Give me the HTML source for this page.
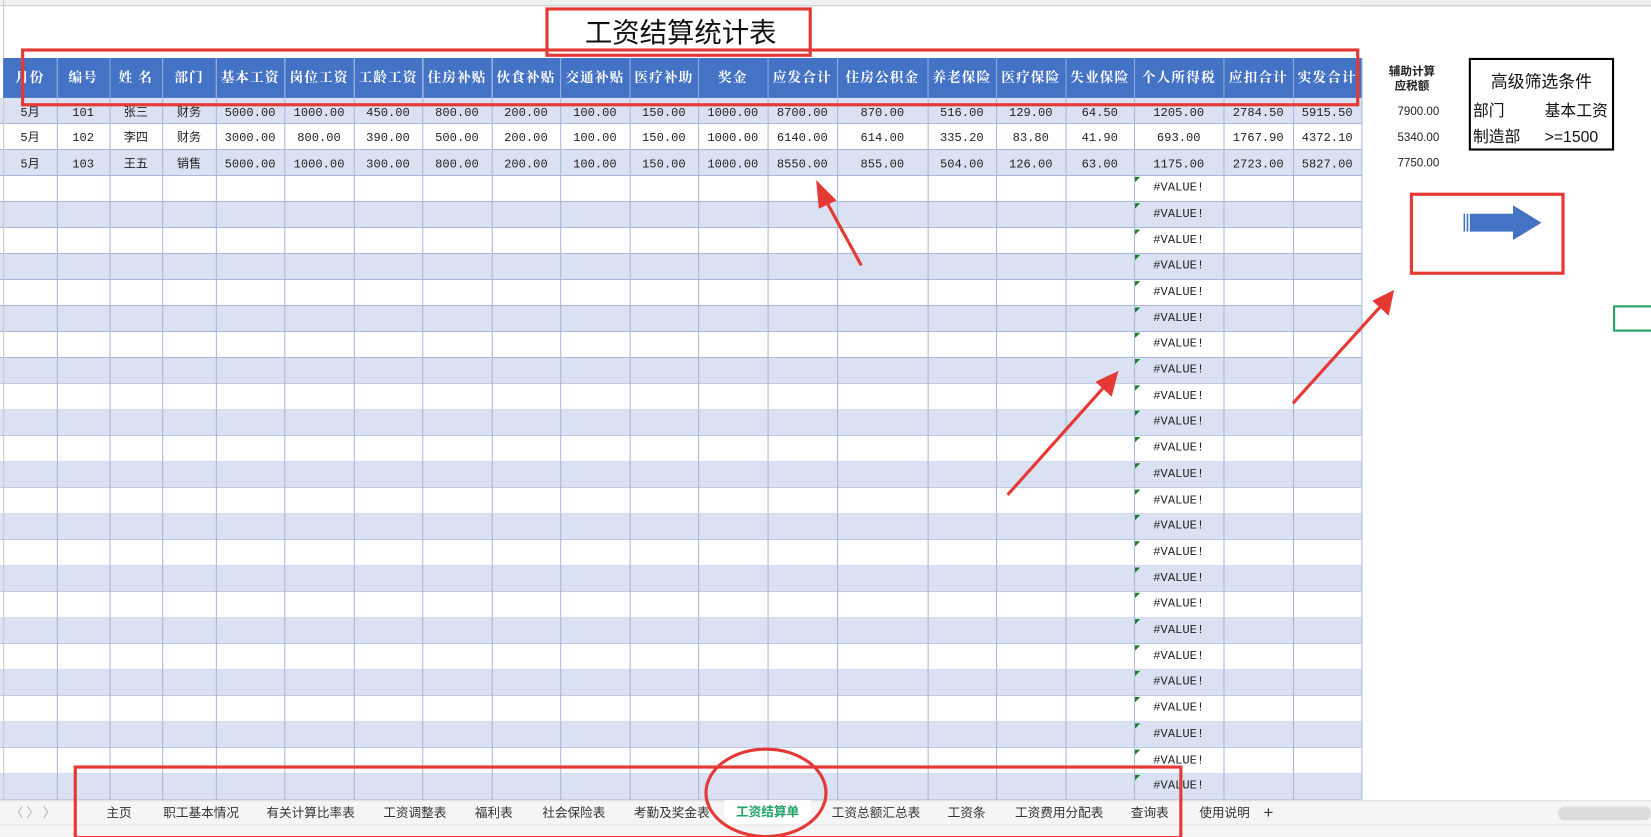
<!DOCTYPE html><html><head><meta charset="utf-8"><style>
*{margin:0;padding:0;box-sizing:border-box}
body{width:1651px;height:837px;overflow:hidden;background:#fff;font-family:"Liberation Sans","Noto Sans CJK SC",sans-serif}
#s{position:absolute;left:0;top:0;width:1568px;height:795px;transform:scale(1.0529);transform-origin:0 0;overflow:hidden}
.a{position:absolute}
.vl{position:absolute;top:55px;height:705px;width:1px;background:#a7b8dc}
#grid{left:0;top:93px;width:1293px;height:667px;background:repeating-linear-gradient(#d9e1f2 0,#d9e1f2 24px,#a7b8dc 24px,#a7b8dc 24.7px,#fff 24.7px,#fff 48.7px,#a7b8dc 48.7px,#a7b8dc 49.4px)}
table{position:absolute;left:3px;border-collapse:collapse;table-layout:fixed;width:1290px}
td{padding:0;text-align:center;overflow:hidden;white-space:nowrap;font-family:"Liberation Mono","Noto Sans CJK SC",monospace;font-size:11.5px;color:#222}
.d td{height:24.7px;line-height:24.7px}
.h td{height:38px;line-height:38px;color:#fff;font-weight:bold;font-family:"Liberation Sans","Noto Serif CJK SC",serif;font-size:13px;letter-spacing:1px;background:#4472c4;border-right:1px solid #8aa6d8}
.v{position:absolute;left:1077px;width:85px;height:24.7px;line-height:24.7px;text-align:center;font-family:"Liberation Mono",monospace;font-size:11.5px;color:#222}
.v:before{content:"";position:absolute;left:1px;top:1px;border-top:5px solid #1a7f2a;border-right:5px solid transparent}
.r{position:absolute;border:3px solid #e53935}
</style></head><body><div id="s">
<div class="a" style="left:0;top:0;width:1568px;height:6px;background:#eef0f2;border-bottom:1px solid #c8c8c8"></div>
<div class="a" id="grid"></div>
<div class="a" style="left:0;top:6px;width:1293px;height:49px;background:#fff"></div>
<div class="vl" style="left:3px;top:0;height:760px;background:#c8c8c8"></div>
<div class="vl" style="left:54px"></div><div class="vl" style="left:104px"></div><div class="vl" style="left:154px"></div><div class="vl" style="left:205px"></div><div class="vl" style="left:270px"></div><div class="vl" style="left:336px"></div><div class="vl" style="left:401px"></div><div class="vl" style="left:467px"></div><div class="vl" style="left:532px"></div><div class="vl" style="left:598px"></div><div class="vl" style="left:663px"></div><div class="vl" style="left:729px"></div><div class="vl" style="left:795px"></div><div class="vl" style="left:881px"></div><div class="vl" style="left:946px"></div><div class="vl" style="left:1012px"></div><div class="vl" style="left:1077px"></div><div class="vl" style="left:1162px"></div><div class="vl" style="left:1228px"></div><div class="vl" style="left:1293px"></div>
<div class="a" style="left:0;top:8px;width:1293px;text-align:center;font-size:26px;line-height:46px;color:#111">工资结算统计表</div>
<table class="h" style="top:55px">
<colgroup><col style="width:51px"><col style="width:50px"><col style="width:50px"><col style="width:51px"><col style="width:65px"><col style="width:66px"><col style="width:65px"><col style="width:66px"><col style="width:65px"><col style="width:66px"><col style="width:65px"><col style="width:66px"><col style="width:66px"><col style="width:86px"><col style="width:65px"><col style="width:66px"><col style="width:65px"><col style="width:85px"><col style="width:66px"><col style="width:65px"></colgroup>
<tr><td>月份</td><td>编号</td><td>姓 名</td><td>部门</td><td>基本工资</td><td>岗位工资</td><td>工龄工资</td><td>住房补贴</td><td>伙食补贴</td><td>交通补贴</td><td>医疗补助</td><td>奖金</td><td>应发合计</td><td>住房公积金</td><td>养老保险</td><td>医疗保险</td><td>失业保险</td><td>个人所得税</td><td>应扣合计</td><td>实发合计</td></tr></table>
<table class="d" style="top:95.5px">
<colgroup><col style="width:51px"><col style="width:50px"><col style="width:50px"><col style="width:51px"><col style="width:65px"><col style="width:66px"><col style="width:65px"><col style="width:66px"><col style="width:65px"><col style="width:66px"><col style="width:65px"><col style="width:66px"><col style="width:66px"><col style="width:86px"><col style="width:65px"><col style="width:66px"><col style="width:65px"><col style="width:85px"><col style="width:66px"><col style="width:65px"></colgroup>
<tr><td>5月</td><td>101</td><td>张三</td><td>财务</td><td>5000.00</td><td>1000.00</td><td>450.00</td><td>800.00</td><td>200.00</td><td>100.00</td><td>150.00</td><td>1000.00</td><td>8700.00</td><td>870.00</td><td>516.00</td><td>129.00</td><td>64.50</td><td>1205.00</td><td>2784.50</td><td>5915.50</td></tr>
<tr><td>5月</td><td>102</td><td>李四</td><td>财务</td><td>3000.00</td><td>800.00</td><td>390.00</td><td>500.00</td><td>200.00</td><td>100.00</td><td>150.00</td><td>1000.00</td><td>6140.00</td><td>614.00</td><td>335.20</td><td>83.80</td><td>41.90</td><td>693.00</td><td>1767.90</td><td>4372.10</td></tr>
<tr><td>5月</td><td>103</td><td>王五</td><td>销售</td><td>5000.00</td><td>1000.00</td><td>300.00</td><td>800.00</td><td>200.00</td><td>100.00</td><td>150.00</td><td>1000.00</td><td>8550.00</td><td>855.00</td><td>504.00</td><td>126.00</td><td>63.00</td><td>1175.00</td><td>2723.00</td><td>5827.00</td></tr>
</table>
<div class="v" style="top:167.1px">#VALUE!</div><div class="v" style="top:191.8px">#VALUE!</div><div class="v" style="top:216.5px">#VALUE!</div><div class="v" style="top:241.2px">#VALUE!</div><div class="v" style="top:265.9px">#VALUE!</div><div class="v" style="top:290.6px">#VALUE!</div><div class="v" style="top:315.3px">#VALUE!</div><div class="v" style="top:340px">#VALUE!</div><div class="v" style="top:364.7px">#VALUE!</div><div class="v" style="top:389.4px">#VALUE!</div><div class="v" style="top:414.1px">#VALUE!</div><div class="v" style="top:438.8px">#VALUE!</div><div class="v" style="top:463.5px">#VALUE!</div><div class="v" style="top:488.2px">#VALUE!</div><div class="v" style="top:512.9px">#VALUE!</div><div class="v" style="top:537.6px">#VALUE!</div><div class="v" style="top:562.3px">#VALUE!</div><div class="v" style="top:587px">#VALUE!</div><div class="v" style="top:611.7px">#VALUE!</div><div class="v" style="top:636.4px">#VALUE!</div><div class="v" style="top:661.1px">#VALUE!</div><div class="v" style="top:685.8px">#VALUE!</div><div class="v" style="top:710.5px">#VALUE!</div><div class="v" style="top:735.2px">#VALUE!</div>
<div class="a" style="left:1310px;top:61px;width:62px;text-align:center;font-size:11px;line-height:14px;font-weight:bold;color:#222">辅助计算<br>应税额</div>
<div class="a" style="left:1310px;top:94px;width:57px;text-align:right;font-size:11px;line-height:24.7px;color:#222">7900.00<br>5340.00<br>7750.00</div>
<div class="a" style="left:1395px;top:55px;width:138px;height:88px;border:2px solid #000;font-size:15px;color:#111">
<div style="text-align:center;margin-top:7px;font-size:16px">高级筛选条件</div>
<div style="position:absolute;left:2px;top:36px;line-height:25px">部门<br>制造部</div>
<div style="position:absolute;left:70px;top:36px;line-height:25px">基本工资<br>&gt;=1500</div></div>
<div class="r" style="left:1339px;top:183px;width:147px;height:78px"></div>
<svg class="a" style="left:1390px;top:195px" width="80" height="40"><rect x="0" y="8" width="1.5" height="17" fill="#4472c4"/><rect x="3" y="8" width="1.5" height="17" fill="#4472c4"/><path d="M6 8H47V0L74 16.5 47 33V25H6Z" fill="#4472c4"/></svg>
<div class="a" style="left:1532px;top:290px;width:40px;height:25px;border:2px solid #21a366"></div>
<div class="r" style="left:518px;top:7px;width:253px;height:47px"></div>
<div class="r" style="left:20px;top:46px;width:1271px;height:55px"></div>
<svg class="a" style="left:0;top:0" width="1568" height="795">
<g stroke="#e53935" stroke-width="3" fill="#e53935">
<line x1="818" y1="252" x2="783" y2="188"/><path d="M777 175L792 190 779 196Z"/>
<line x1="957" y1="470" x2="1050" y2="366"/><path d="M1060 355L1055 374 1043 363Z"/>
<line x1="1228" y1="383" x2="1313" y2="289"/><path d="M1322 278L1318 297 1306 286Z"/>
</g></svg>
<div class="a" style="left:0;top:760px;width:1568px;height:23px;background:#f5f5f5;border-top:1px solid #ddd;font-size:12px;color:#333;line-height:23px">
<span class="a" style="left:10px;color:#aaa">〈 〉 〉</span>
<span class="a" style="left:101px">主页</span><span class="a" style="left:155px">职工基本情况</span><span class="a" style="left:253px">有关计算比率表</span><span class="a" style="left:364px">工资调整表</span><span class="a" style="left:451px">福利表</span><span class="a" style="left:515px">社会保险表</span><span class="a" style="left:602px">考勤及奖金表</span>
<span class="a" style="left:688px;top:-1px;width:82px;height:24px;background:#fff;text-align:center;color:#21a366;font-weight:bold">工资结算单</span>
<span class="a" style="left:790px">工资总额汇总表</span><span class="a" style="left:900px">工资条</span><span class="a" style="left:964px">工资费用分配表</span><span class="a" style="left:1074px">查询表</span><span class="a" style="left:1139px">使用说明</span><span class="a" style="left:1200px;font-size:16px">+</span>
<span class="a" style="left:1480px;top:5px;width:88px;height:13px;background:#dcdcdc;border-radius:6px"></span></div>
<div class="a" style="left:0;top:783px;width:1568px;height:12px;background:#f5f5f5;border-top:1px solid #e2e2e2"></div>
<div class="r" style="left:70px;top:727px;width:1053px;height:70px"></div>
<div class="a" style="left:669px;top:710px;width:117px;height:86px;border:3px solid #e53935;border-radius:50%"></div>
</div></body></html>
